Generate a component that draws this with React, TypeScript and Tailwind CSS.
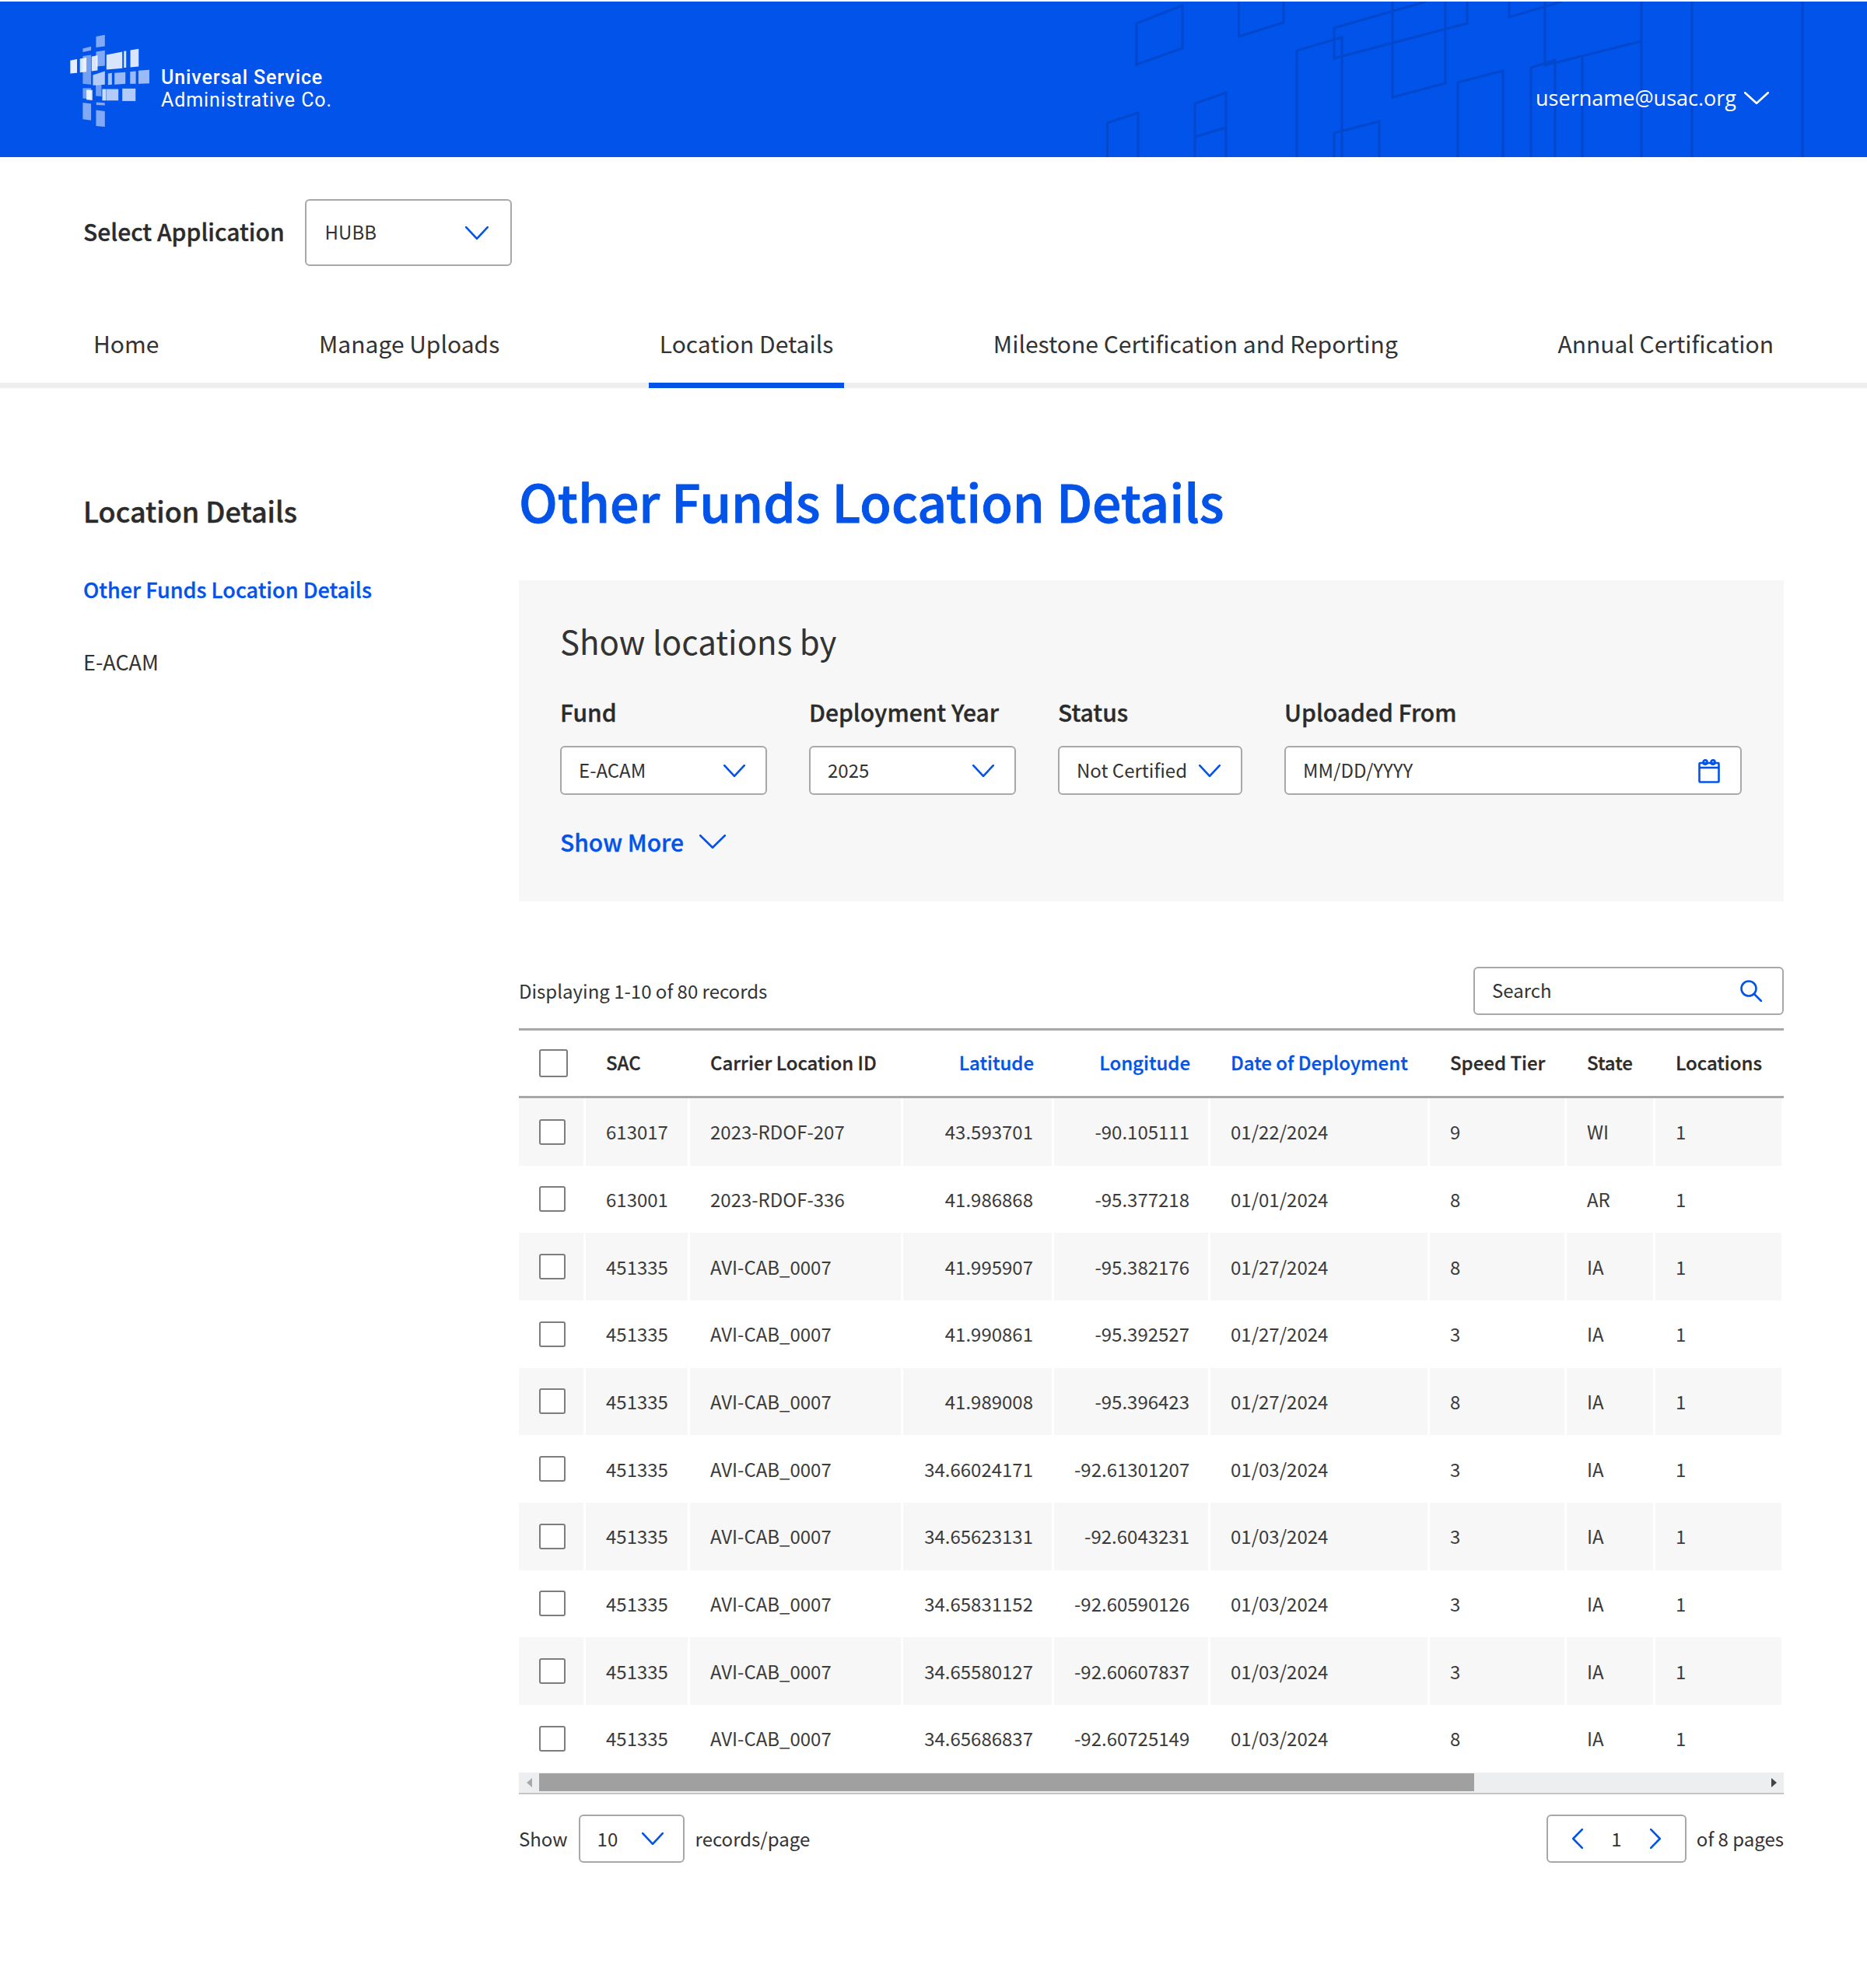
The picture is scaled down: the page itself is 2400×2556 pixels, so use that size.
import React from "react";

const rows = [
  ["613017", "2023-RDOF-207", "43.593701", "-90.105111", "01/22/2024", "9", "WI", "1"],
  ["613001", "2023-RDOF-336", "41.986868", "-95.377218", "01/01/2024", "8", "AR", "1"],
  ["451335", "AVI-CAB_0007", "41.995907", "-95.382176", "01/27/2024", "8", "IA", "1"],
  ["451335", "AVI-CAB_0007", "41.990861", "-95.392527", "01/27/2024", "3", "IA", "1"],
  ["451335", "AVI-CAB_0007", "41.989008", "-95.396423", "01/27/2024", "8", "IA", "1"],
  ["451335", "AVI-CAB_0007", "34.66024171", "-92.61301207", "01/03/2024", "3", "IA", "1"],
  ["451335", "AVI-CAB_0007", "34.65623131", "-92.6043231", "01/03/2024", "3", "IA", "1"],
  ["451335", "AVI-CAB_0007", "34.65831152", "-92.60590126", "01/03/2024", "3", "IA", "1"],
  ["451335", "AVI-CAB_0007", "34.65580127", "-92.60607837", "01/03/2024", "3", "IA", "1"],
  ["451335", "AVI-CAB_0007", "34.65686837", "-92.60725149", "01/03/2024", "8", "IA", "1"],
];

const tiles: [string, number][] = [
  ["159,50 193,43 193,87 159,92", 0.5],
  ["108,96 140,88 140,103 108,110", 0.5],
  ["108,125 140,120 140,235 108,232", 0.45],
  ["60,142 86,137 86,190 60,192", 0.9],
  ["97,135 122,131 122,185 97,188", 0.85],
  ["142,127 165,122 165,180 142,183", 0.85],
  ["159,108 193,103 193,162 159,165", 0.5],
  ["199,120 260,108 260,172 199,177", 0.85],
  ["266,106 275,105 275,170 266,170", 0.85],
  ["291,102 323,97 323,165 291,168", 0.85],
  ["147,198 193,183 193,235 147,238", 0.7],
  ["205,192 220,190 220,235 205,236", 0.65],
  ["230,190 272,187 272,232 230,235", 0.6],
  ["290,185 312,183 312,232 290,232", 0.6],
  ["322,181 364,178 364,230 322,232", 0.6],
  ["158,235 180,235 180,280 158,278", 0.45],
  ["108,248 140,248 140,290 108,288", 0.45],
  ["122,255 145,256 145,295 122,293", 0.85],
  ["183,252 197,252 197,296 183,296", 0.8],
  ["198,252 245,252 245,296 198,296", 0.7],
  ["260,250 311,250 311,298 260,298", 0.7],
  ["160,303 193,305 193,315 160,313", 0.5],
  ["108,304 140,308 140,372 108,368", 0.5],
  ["159,333 193,337 193,397 159,394", 0.5],
];

function Logo() {
  return (
    <svg width="107" height="122" viewBox="50 35 320 365" className="shrink-0">
      {tiles.map(([p, o], i) => (
        <polygon key={i} points={p} fill="#ffffff" fillOpacity={o} />
      ))}
    </svg>
  );
}

function HeaderArt() {
  const paths = [
    "M1461 30L1520 7V62L1461 83Z",
    "M1592.5 2V47L1650 29V2",
    "M1833 2L1715 36V75L1886 30V2",
    "M1790 2V125L1858 107V2",
    "M1667 202V65L1725 48V202",
    "M1940 2V22L2008 2",
    "M1986 2V84L2110 53",
    "M2110 2V202",
    "M2175 2V202",
    "M2317 2V202",
    "M1874 202V106L1932 91V202",
    "M1968 202V87L1999 77V202",
    "M2034 202V74",
    "M1423.5 202V158L1463 145V202",
    "M1536 202V133L1576 119V202",
    "M1536 176L1576 164",
    "M1715 202V171L1773 156V202",
  ];
  return (
    <svg
      className="absolute left-0 top-0"
      width="2400"
      height="200"
      viewBox="0 2 2400 200"
      fill="none"
      stroke="#0148cc"
      strokeWidth="3"
    >
      {paths.map((d, i) => (
        <path key={i} d={d} />
      ))}
    </svg>
  );
}

function Chevron({ w = 28, h = 16, color = "#0353e9", dir = "down" }: { w?: number; h?: number; color?: string; dir?: string }) {
  const d =
    dir === "down"
      ? `M1.2 1.2L${w / 2} ${h - 1.2}L${w - 1.2} 1.2`
      : dir === "left"
      ? `M${w - 1.2} 1.2L1.2 ${h / 2}L${w - 1.2} ${h - 1.2}`
      : `M1.2 1.2L${w - 1.2} ${h / 2}L1.2 ${h - 1.2}`;
  return (
    <svg width={w} height={h} viewBox={`0 0 ${w} ${h}`} fill="none" stroke={color} strokeWidth="2.6" className="shrink-0">
      <path d={d} strokeLinecap="round" strokeLinejoin="round" />
    </svg>
  );
}

function Select({ label, className }: { label: string; className: string }) {
  return (
    <div className={`flex h-[63px] items-center justify-between rounded-[6px] border-2 border-[#a8a8a8] bg-white pl-[22px] pr-[26px] text-[24px] text-[#333333] ${className}`}>
      <span className="pb-[2px]">{label}</span>
      <Chevron />
    </div>
  );
}

function Field({ label, children }: { label: string; children: React.ReactNode }) {
  return (
    <div className="flex flex-col">
      <div className="mb-[22px] h-[44px] whitespace-nowrap text-[30px] font-medium leading-[44px] text-[#2b2b2b] [-webkit-text-stroke:0.35px]">{label}</div>
      {children}
    </div>
  );
}

function Box({ wide }: { wide?: boolean }) {
  return (
    <div
      className={`rounded-[3px] border-2 border-[#7d7d7d] bg-white ${wide ? "h-[36px] w-[37px]" : "h-[33px] w-[34px]"}`}
    />
  );
}

const thLine = "border-y-[3px] border-[#a8a8a8]";

const Th = ({ children, blue, right }: { children?: React.ReactNode; blue?: boolean; right?: boolean }) => (
  <th className={`${thLine} whitespace-nowrap px-[26px] pb-[3px] text-[24px] font-medium [-webkit-text-stroke:0.3px] ${right ? "text-right" : "text-left"} ${blue ? "text-[#0353e9]" : "text-[#2b2b2b]"}`}>
    {children}
  </th>
);

export default function App() {
  return (
    <div
      className="min-h-[2556px] w-[2400px] bg-white pt-[2px]"
      style={{ fontFamily: '"Noto Sans CJK SC", "Noto Sans", sans-serif' }}
    >
      <header className="relative flex h-[200px] items-center justify-between overflow-hidden bg-[#0253ea] pl-[87px] pr-[126px]">
        <HeaderArt />
        <div className="relative flex items-center gap-[13px] pt-[2px] text-white" style={{ fontFamily: "Roboto, sans-serif" }}>
          <Logo />
          <div className="pt-[21px] text-[25px] leading-[29px] tracking-[0.9px]">
            <div className="font-medium">Universal Service</div>
            <div className="font-normal tracking-[0.9px]">Administrative Co.</div>
          </div>
        </div>
        <div
          className="relative flex items-center gap-[10px] pt-[48px] text-[27px] leading-[38px] text-white"
          style={{ fontFamily: '"Open Sans", sans-serif' }}
        >
          <span>username@usac.org</span>
          <Chevron w={32} h={16} color="#ffffff" />
        </div>
      </header>

      <div className="flex items-center gap-[26px] pl-[107px] pt-[54px]">
        <div className="pb-[3px] text-[30px] font-medium text-[#2b2b2b] [-webkit-text-stroke:0.35px]">Select Application</div>
        <div className="flex h-[86px] w-[266px] items-center justify-between rounded-[6px] border-2 border-[#a8a8a8] pl-[24px] pr-[28px] text-[24px] text-[#333333]">
          <span className="pb-[2px]">HUBB</span>
          <Chevron w={30} h={17} />
        </div>
      </div>

      <nav className="mt-[56px] flex h-[101px] justify-between border-b-[7px] border-[#edeef0] pl-[106px] pr-[106px] text-[30px] text-[#333333]">
        {["Home", "Manage Uploads", "Location Details", "Milestone Certification and Reporting", "Annual Certification"].map((t) => (
          <div
            key={t}
            className={`-mb-[7px] flex h-[101px] items-start px-[14px] pt-[21px] ${t === "Location Details" ? "border-b-[7px] border-[#0353e9]" : ""}`}
          >
            {t}
          </div>
        ))}
      </nav>

      <div className="flex pl-[107px] pt-[101px]">
        <aside className="w-[560px] shrink-0 pt-[30px]">
          <div className="text-[36px] font-medium leading-[52px] text-[#2b2b2b] [-webkit-text-stroke:0.4px]">Location Details</div>
          <div className="mt-[56px] text-[27px] font-medium leading-[40px] text-[#0353e9] [-webkit-text-stroke:0.3px]">Other Funds Location Details</div>
          <div className="mt-[53px] text-[27px] leading-[40px] text-[#333333]">E-ACAM</div>
        </aside>

        <main className="w-[1626px]">
          <h1 className="text-[66px] font-medium leading-[86px] text-[#0353e9] [-webkit-text-stroke:0.9px]">Other Funds Location Details</h1>

          <section className="mt-[60px] h-[413px] bg-[#f7f7f7] px-[53px] pt-[47px]">
            <div className="text-[42px] leading-[62px] text-[#333333]">Show locations by</div>
            <div className="mt-[38px] flex gap-[54px]">
              <Field label="Fund">
                <Select label="E-ACAM" className="w-[266px]" />
              </Field>
              <Field label="Deployment Year">
                <Select label="2025" className="w-[266px]" />
              </Field>
              <Field label="Status">
                <Select label="Not Certified" className="w-[237px]" />
              </Field>
              <Field label="Uploaded From">
                <div className="flex h-[63px] w-[588px] items-center justify-between rounded-[6px] border-2 border-[#a8a8a8] bg-white pl-[22px] pr-[26px] text-[24px] text-[#333333]">
                  <span className="pb-[2px]">MM/DD/YYYY</span>
                  <svg width="28" height="32" viewBox="0 0 28 32" fill="none" stroke="#0353e9" strokeWidth="2.6">
                    <rect x="1.5" y="6" width="25" height="24.5" rx="1" />
                    <path d="M1.5 12H26.5" />
                    <circle cx="9" cy="5" r="2.6" />
                    <circle cx="19" cy="5" r="2.6" />
                  </svg>
                </div>
              </Field>
            </div>
            <div className="mt-[37px] flex items-center gap-[20px] text-[30px] font-medium leading-[46px] text-[#0353e9] [-webkit-text-stroke:0.35px]">
              <span>Show More</span>
              <Chevron w={34} h={18} />
            </div>
          </section>

          <div className="mt-[84px] flex h-[62px] items-center justify-between text-[24px] text-[#333333]">
            <span>Displaying 1-10 of 80 records</span>
            <div className="flex h-[62px] w-[399px] items-center justify-between rounded-[6px] border-2 border-[#a8a8a8] pl-[22px] pr-[26px]">
              <span className="pb-[2px]">Search</span>
              <svg width="28" height="28" viewBox="0 0 28 28" fill="none" stroke="#0353e9" strokeWidth="2.6">
                <circle cx="11" cy="11" r="9.5" />
                <path d="M18 18L27 27" strokeLinecap="round" />
              </svg>
            </div>
          </div>

          <table className="mt-[17px] w-[1626px] table-fixed border-separate border-spacing-0 text-[24px] text-[#3b3b3b]">
            <colgroup>
              <col className="w-[86px]" />
              <col className="w-[134px]" />
              <col className="w-[274px]" />
              <col className="w-[194px]" />
              <col className="w-[201px]" />
              <col className="w-[282px]" />
              <col className="w-[176px]" />
              <col className="w-[114px]" />
              <col className="w-[165px]" />
            </colgroup>
            <thead>
              <tr className="h-[90px]">
                <th className={`${thLine} pl-[26px] text-left`}>
                  <Box wide />
                </th>
                <Th>SAC</Th>
                <Th>Carrier Location ID</Th>
                <Th blue right>Latitude</Th>
                <Th blue right>Longitude</Th>
                <Th blue>Date of Deployment</Th>
                <Th>Speed Tier</Th>
                <Th>State</Th>
                <Th>Locations</Th>
              </tr>
            </thead>
            <tbody>
              {rows.map((r, i) => (
                <tr key={i} className={`h-[86.67px] ${i % 2 === 0 ? "bg-[#f7f7f7]" : "bg-white"}`}>
                  <td className="border-r-[3px] border-white pl-[26px]">
                    <Box />
                  </td>
                  {r.map((c, j) => (
                    <td
                      key={j}
                      className={`border-r-[3px] border-white ${j === 2 || j === 3 ? "pl-[26px] pr-[24px] text-right" : "px-[26px] text-left"}`}
                    >
                      {c}
                    </td>
                  ))}
                </tr>
              ))}
            </tbody>
          </table>

          <div className="flex h-[28px] items-center border-b-[2px] border-[#c4c4c4] bg-[#edeef0]">
            <div className="flex h-full w-[26px] items-center justify-center">
              <div className="h-0 w-0 border-y-[6px] border-r-[7px] border-y-transparent border-r-[#a8a8a8]" />
            </div>
            <div className="h-[23px] w-[1202px] bg-[#a0a0a0]" />
            <div className="flex-1" />
            <div className="flex h-full w-[26px] items-center justify-center">
              <div className="h-0 w-0 border-y-[6px] border-l-[7px] border-y-transparent border-l-[#444444]" />
            </div>
          </div>

          <div className="mt-[26px] flex items-center text-[24px] text-[#333333]">
            <span>Show</span>
            <div className="ml-[14px] flex h-[62px] w-[136px] items-center justify-between rounded-[6px] border-2 border-[#a8a8a8] pl-[22px] pr-[25px]">
              <span>10</span>
              <Chevron />
            </div>
            <span className="ml-[14px]">records/page</span>
            <div className="ml-auto flex h-[62px] w-[180px] items-center justify-between rounded-[6px] border-2 border-[#a8a8a8] px-[31px]">
              <Chevron w={14} h={26} dir="left" />
              <span>1</span>
              <Chevron w={14} h={26} dir="right" />
            </div>
            <span className="ml-[13px]">of 8 pages</span>
          </div>
        </main>
      </div>
    </div>
  );
}
